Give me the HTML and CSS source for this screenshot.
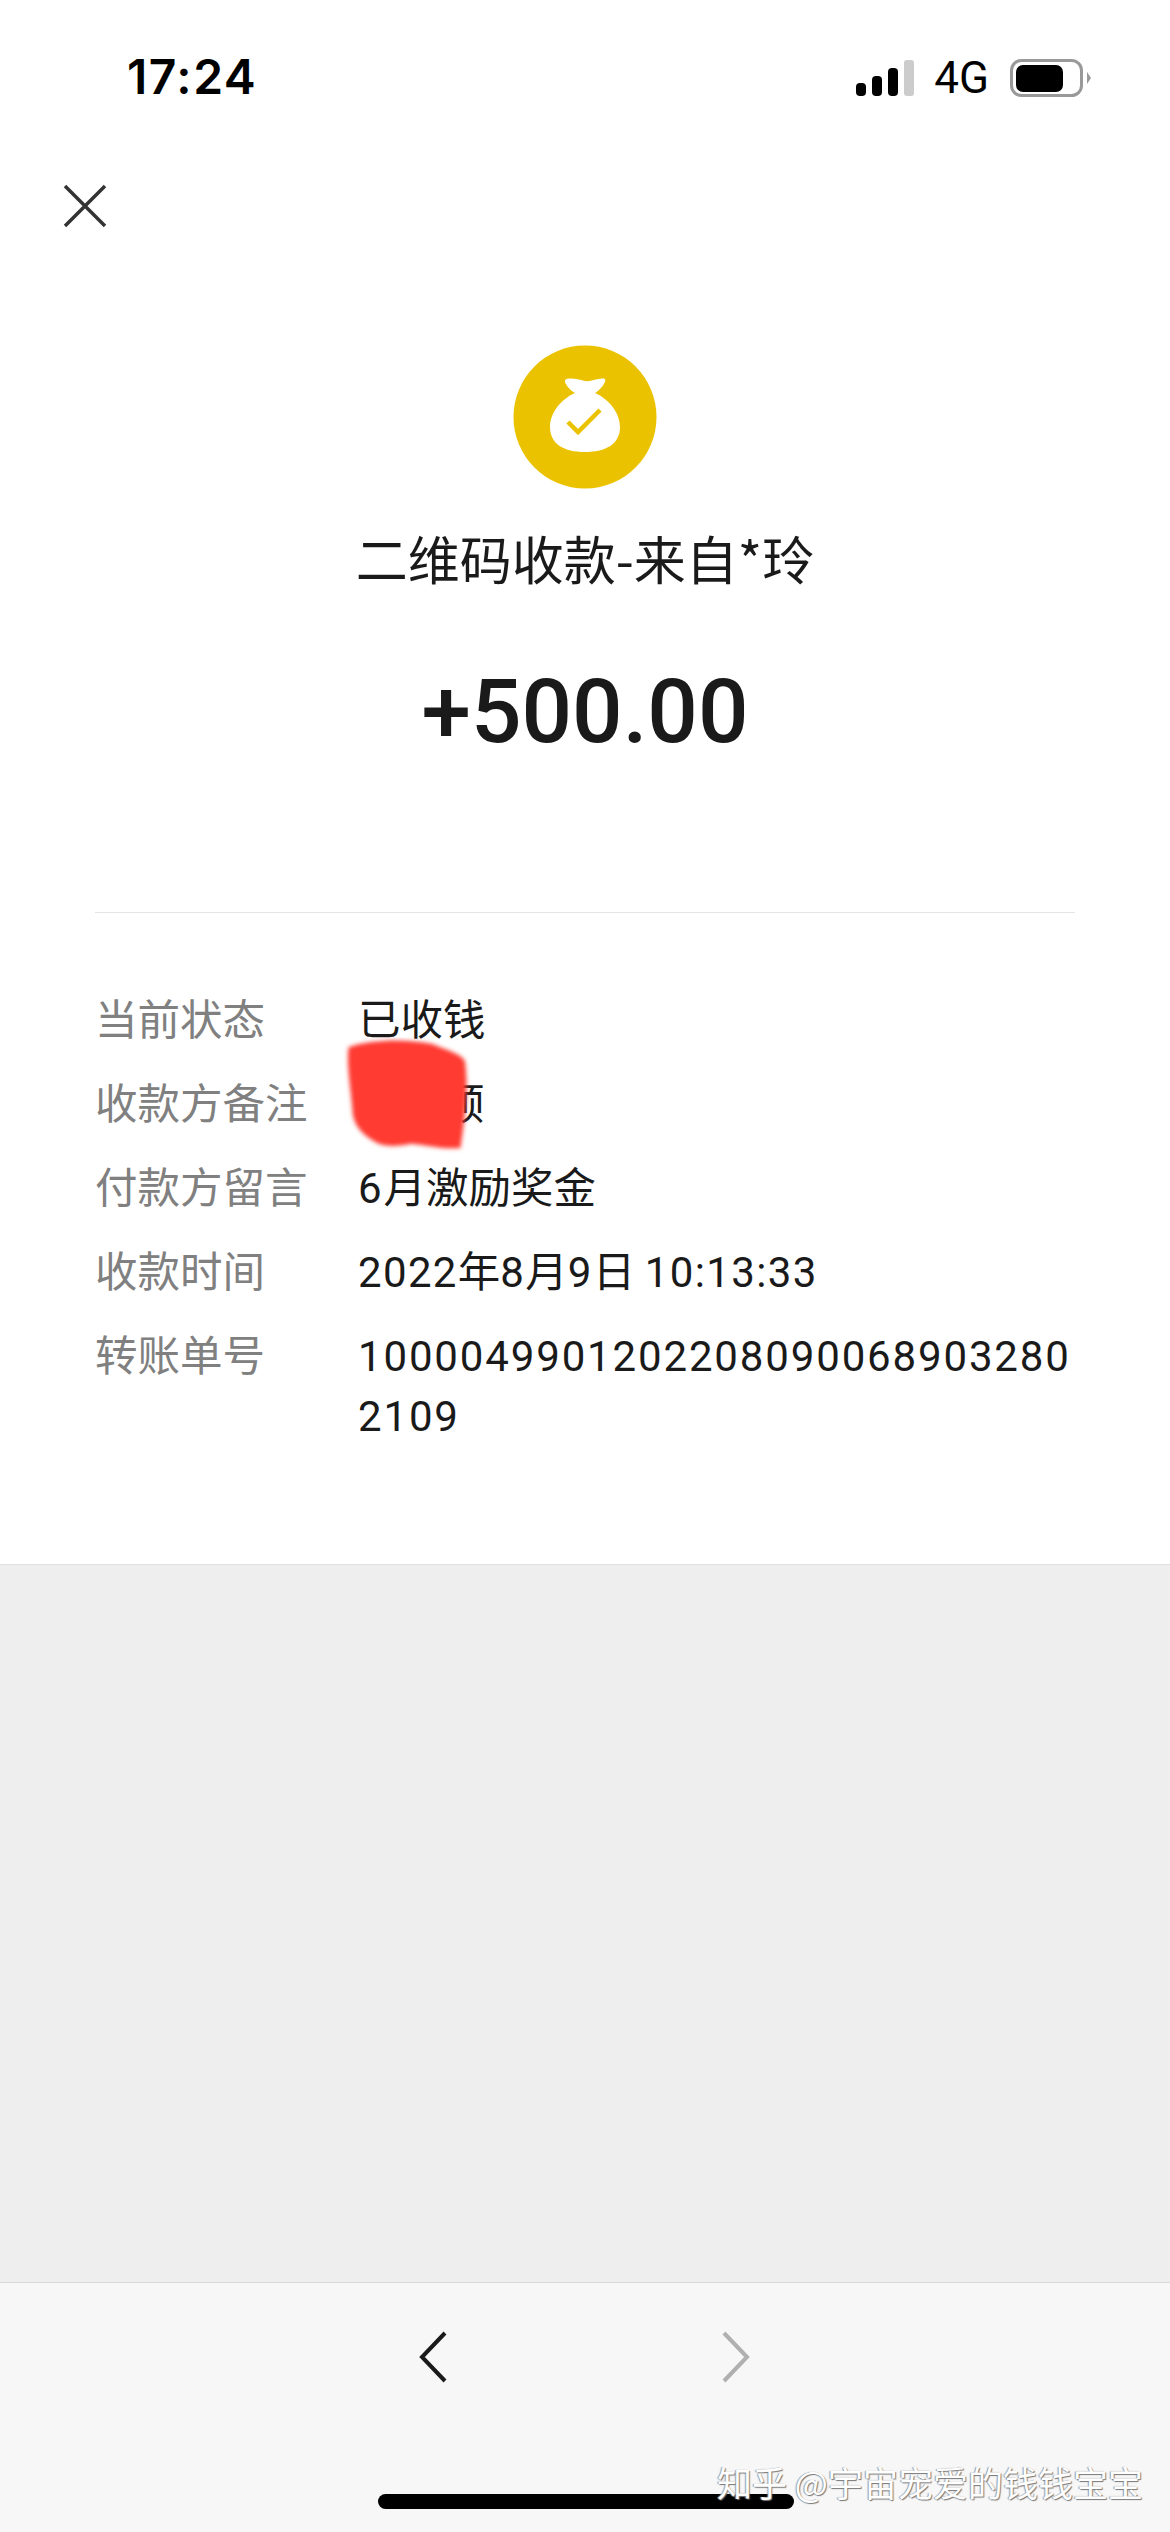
FILE: index.html
```html
<!DOCTYPE html>
<html lang="zh-CN">
	<head>
		<title>二维码收款</title>
		<meta charset="utf-8" />
		<link rel="stylesheet" href="styles.css">
	</head>
	<body>
		<div class="status-bar">
			<span class="clock">17:24</span>
			<div class="status-icons">
				<svg class="signal" width="58" height="36" viewBox="0 0 58 36">
					<rect x="0" y="23" width="10" height="13" rx="4" fill="#000" />
					<rect x="16" y="16" width="10" height="20" rx="4" fill="#000" />
					<rect x="32" y="8" width="10" height="28" rx="4" fill="#000" />
					<rect x="48" y="0" width="10" height="36" rx="3" fill="#ccc" />
				</svg>
				<span class="net">4G</span>
				<svg class="battery" width="82" height="38" viewBox="0 0 82 38">
					<rect x="1.5" y="1.5" width="70" height="35" rx="10" fill="none" stroke="#999" stroke-width="3" />
					<rect x="6" y="6" width="47" height="27" rx="7" fill="#000" />
					<path d="M77 13l4 6-4 6z" fill="#999" />
				</svg>
			</div>
		</div>

		<div class="top-nav">
			<svg width="44" height="44" viewBox="0 0 44 44">
				<path d="M2 2L42 42M42 2L2 42" stroke="#333" stroke-width="3.5" fill="none" />
			</svg>
		</div>

		<div class="summary">
			<svg class="bag-icon" width="144" height="144" viewBox="0 0 144 144">
				<circle cx="72" cy="72" r="71.5" fill="#ebc200" />
				<path d="M52 35c4-3 12-1 20 1 7 1 14-4 20-2 2 3-6 12-10 14 14 6 25 20 25 34 0 17-14 25-35 25s-35-8-35-25c0-14 11-28 25-34-4-2-11-9-10-13z" fill="#fff" />
				<path d="M55 77l10 10 22-22" fill="none" stroke="#ebc200" stroke-width="4.5" />
			</svg>
			<div class="title">二维码收款-来自*玲</div>
			<div class="amount">+500.00</div>
		</div>

		<div class="details">
			<div class="row"><div class="label">当前状态</div><div class="value">已收钱</div></div>
			<div class="row"><div class="label">收款方备注</div><div class="value"><span class="masked"></span>顺</div></div>
			<div class="row"><div class="label">付款方留言</div><div class="value"><span class="num">6</span>月激励奖金</div></div>
			<div class="row"><div class="label">收款时间</div><div class="value time"><span class="num">2022</span>年<span class="num">8</span>月<span class="num">9</span>日 <span class="num">10:13:33</span></div></div>
			<div class="row"><div class="label">转账单号</div><div class="value"><span class="num">10000499012022080900689032802109</span></div></div>
			<svg class="scribble" width="140" height="118" viewBox="0 0 130 116" preserveAspectRatio="none">
				<defs><filter id="soft"><feGaussianBlur stdDeviation="2" /></filter></defs>
				<path d="M6 10C30 2 60 2 84 7c10 5 24 8 30 16 3 20 2 46-4 86-16 2-34-3-46-4-12 3-24 3-32-1-10-6-20-14-22-28C9 56 4 30 6 10z" fill="#ff3b30" filter="url(#soft)" />
			</svg>
		</div>

		<div class="filler"></div>

		<div class="bottom-bar">
			<div class="arrows">
				<svg width="30" height="52" viewBox="0 0 30 52"><path d="M27 2L4 26l23 24" fill="none" stroke="#1a1a1a" stroke-width="4" /></svg>
				<svg width="30" height="52" viewBox="0 0 30 52"><path d="M3 2l23 24L3 50" fill="none" stroke="#b0b0b0" stroke-width="4" /></svg>
			</div>
			<div class="home-line"></div>
			<div class="watermark">知乎 @宇宙宠爱的钱钱宝宝</div>
		</div>
	</body>
</html>
```

FILE: styles.css
```css
html, body {margin: 0; padding: 0;}
body {width: 1170px; height: 2532px; display: flex; flex-direction: column; background: #fff; color: #1a1a1a; font-family: "Noto Sans CJK SC", "Noto Sans", sans-serif; overflow: hidden;}

.status-bar {height: 156px; box-sizing: border-box; padding: 52px 78px 0 127px; display: flex; justify-content: space-between; align-items: flex-start;}
.clock {font-family: "Inter", sans-serif; font-weight: 600; font-size: 48px; line-height: 50px; letter-spacing: 1.5px; color: #000;}
.status-icons {display: flex; align-items: center; margin-top: 7px;}
.net {font-family: "Roboto", sans-serif; font-size: 44px; line-height: 36px; color: #000; margin: 0 21px 0 20px;}

.top-nav {height: 90px; padding: 28px 0 0 63px; box-sizing: border-box;}
.top-nav svg {display: block;}

.summary {display: flex; flex-direction: column; align-items: center; padding-top: 99px;}
.bag-icon {display: block;}
.title {font-size: 52px; line-height: 70px; margin-top: 34px; color: #1a1a1a;}
.amount {font-family: "Roboto", sans-serif; font-weight: 500; font-size: 89px; line-height: 106px; margin-top: 66px;}

.details {position: relative; margin: 147px 95px 0; padding-top: 74px; border-top: 1px solid #e5e5e5;}
.row {display: flex; font-size: 42.5px; line-height: 60px; margin-bottom: 24px;}
.label {width: 263px; flex: none; color: #808080; box-sizing: border-box;}
.value {flex: 1; color: #1a1a1a;}
.num {font-family: "Roboto", sans-serif; font-size: 42px; line-height: 1; letter-spacing: 1.85px; word-break: break-all;}
.time .num {letter-spacing: 1.35px;}
.masked {display: inline-block; width: 84px;}
.scribble {position: absolute; left: 247px; top: 124px;}

.filler {flex: 1; background: #eee; border-top: 1px solid #e0e0e0; margin-top: 97px;}

.bottom-bar {position: relative; height: 250px; flex: none; box-sizing: border-box; background: #f7f7f7; border-top: 1px solid #d8d8d8;}
.arrows {display: flex; gap: 273px; padding: 48px 0 0 418px;}
.home-line {position: absolute; left: 378px; top: 211px; width: 416px; height: 15px; border-radius: 8px; background: #000;}
.watermark {position: absolute; left: 717px; top: 175px; font-size: 35px; line-height: 48px; white-space: nowrap; color: #fff; text-shadow: 1px 1px 1px #777, -1px 0 1px #999;}
```
